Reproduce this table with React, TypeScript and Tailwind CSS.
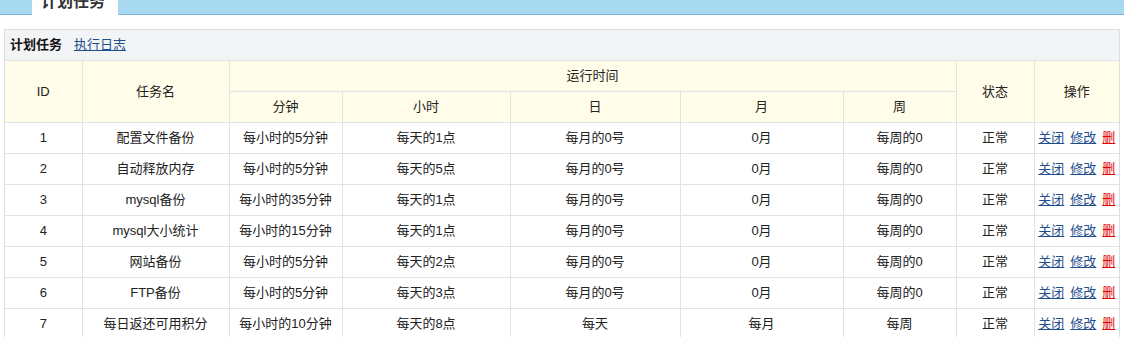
import * as React from 'react';

type Task = {
  id: number;
  name: string;
  minute: string;
  hour: string;
  day: string;
  month: string;
  week: string;
  status: string;
};

const tasks: Task[] = [
  { id: 1, name: "配置文件备份", minute: "每小时的5分钟", hour: "每天的1点", day: "每月的0号", month: "0月", week: "每周的0", status: "正常" },
  { id: 2, name: "自动释放内存", minute: "每小时的5分钟", hour: "每天的5点", day: "每月的0号", month: "0月", week: "每周的0", status: "正常" },
  { id: 3, name: "mysql备份", minute: "每小时的35分钟", hour: "每天的1点", day: "每月的0号", month: "0月", week: "每周的0", status: "正常" },
  { id: 4, name: "mysql大小统计", minute: "每小时的15分钟", hour: "每天的1点", day: "每月的0号", month: "0月", week: "每周的0", status: "正常" },
  { id: 5, name: "网站备份", minute: "每小时的5分钟", hour: "每天的2点", day: "每月的0号", month: "0月", week: "每周的0", status: "正常" },
  { id: 6, name: "FTP备份", minute: "每小时的5分钟", hour: "每天的3点", day: "每月的0号", month: "0月", week: "每周的0", status: "正常" },
  { id: 7, name: "每日返还可用积分", minute: "每小时的10分钟", hour: "每天的8点", day: "每天", month: "每月", week: "每周", status: "正常" },
];

const cell = "border border-[#e2e2e2] h-[31px] p-0 text-center align-middle";

const App = () => {
  return (
    <div className="h-[337px] w-[1124px] overflow-hidden bg-white text-[13px] text-[#222] [font-family:'Liberation_Sans','Noto_Sans_CJK_SC',sans-serif]">
      {/* 顶部标签栏 */}
      <div className="flex h-[15px] overflow-hidden bg-[#a6d8f0]">
        <div className="w-[32px] border-b border-[#80b6cf]" />
        <div className="w-[86px] bg-white pl-[9px]">
          <span className="-mt-[8px] block text-[16px] font-bold leading-[20px] text-[#333]">计划任务</span>
        </div>
        <div className="flex-1 border-b border-[#80b6cf]" />
      </div>

      <div className="mx-[4px] mt-[14px] border border-[#dcdfe2] bg-[#f3f4f6]">
        <div className="flex h-[30px] items-center gap-[12px] pl-[5px]">
          <span className="font-bold text-[#111]">计划任务</span>
          <a href="#" className="text-[#1f4e8c] underline">执行日志</a>
        </div>

        <table className="w-full table-fixed border-collapse bg-white">
          <colgroup>
            <col className="w-[77px]" />
            <col className="w-[147px]" />
            <col className="w-[113px]" />
            <col className="w-[168px]" />
            <col className="w-[170px]" />
            <col className="w-[163px]" />
            <col className="w-[113px]" />
            <col className="w-[78px]" />
            <col />
          </colgroup>
          <thead className="bg-[#fffde9]">
            <tr>
              <th rowSpan={2} className={`${cell} font-normal border-l-0`}>ID</th>
              <th rowSpan={2} className={`${cell} font-normal`}>任务名</th>
              <th colSpan={5} className={`${cell} font-normal`}>运行时间</th>
              <th rowSpan={2} className={`${cell} font-normal`}>状态</th>
              <th rowSpan={2} className={`${cell} font-normal border-r-0`}>操作</th>
            </tr>
            <tr>
              <th className={`${cell} font-normal`}>分钟</th>
              <th className={`${cell} font-normal`}>小时</th>
              <th className={`${cell} font-normal`}>日</th>
              <th className={`${cell} font-normal`}>月</th>
              <th className={`${cell} font-normal`}>周</th>
            </tr>
          </thead>
          <tbody>
            {tasks.map((t) => (
              <tr key={t.id}>
                <td className={`${cell} border-l-0`}>{t.id}</td>
                <td className={cell}>{t.name}</td>
                <td className={cell}>{t.minute}</td>
                <td className={cell}>{t.hour}</td>
                <td className={cell}>{t.day}</td>
                <td className={cell}>{t.month}</td>
                <td className={cell}>{t.week}</td>
                <td className={cell}>{t.status}</td>
                <td className={`${cell} border-r-0`}>
                  <a href="#" className="text-[#1f4e8c] underline">关闭</a>
                  <a href="#" className="ml-[6px] text-[#1f4e8c] underline">修改</a>
                  <a href="#" className="ml-[6px] text-[#e00000] underline">删</a>
                </td>
              </tr>
            ))}
          </tbody>
        </table>
      </div>
    </div>
  );
};

export default App;
